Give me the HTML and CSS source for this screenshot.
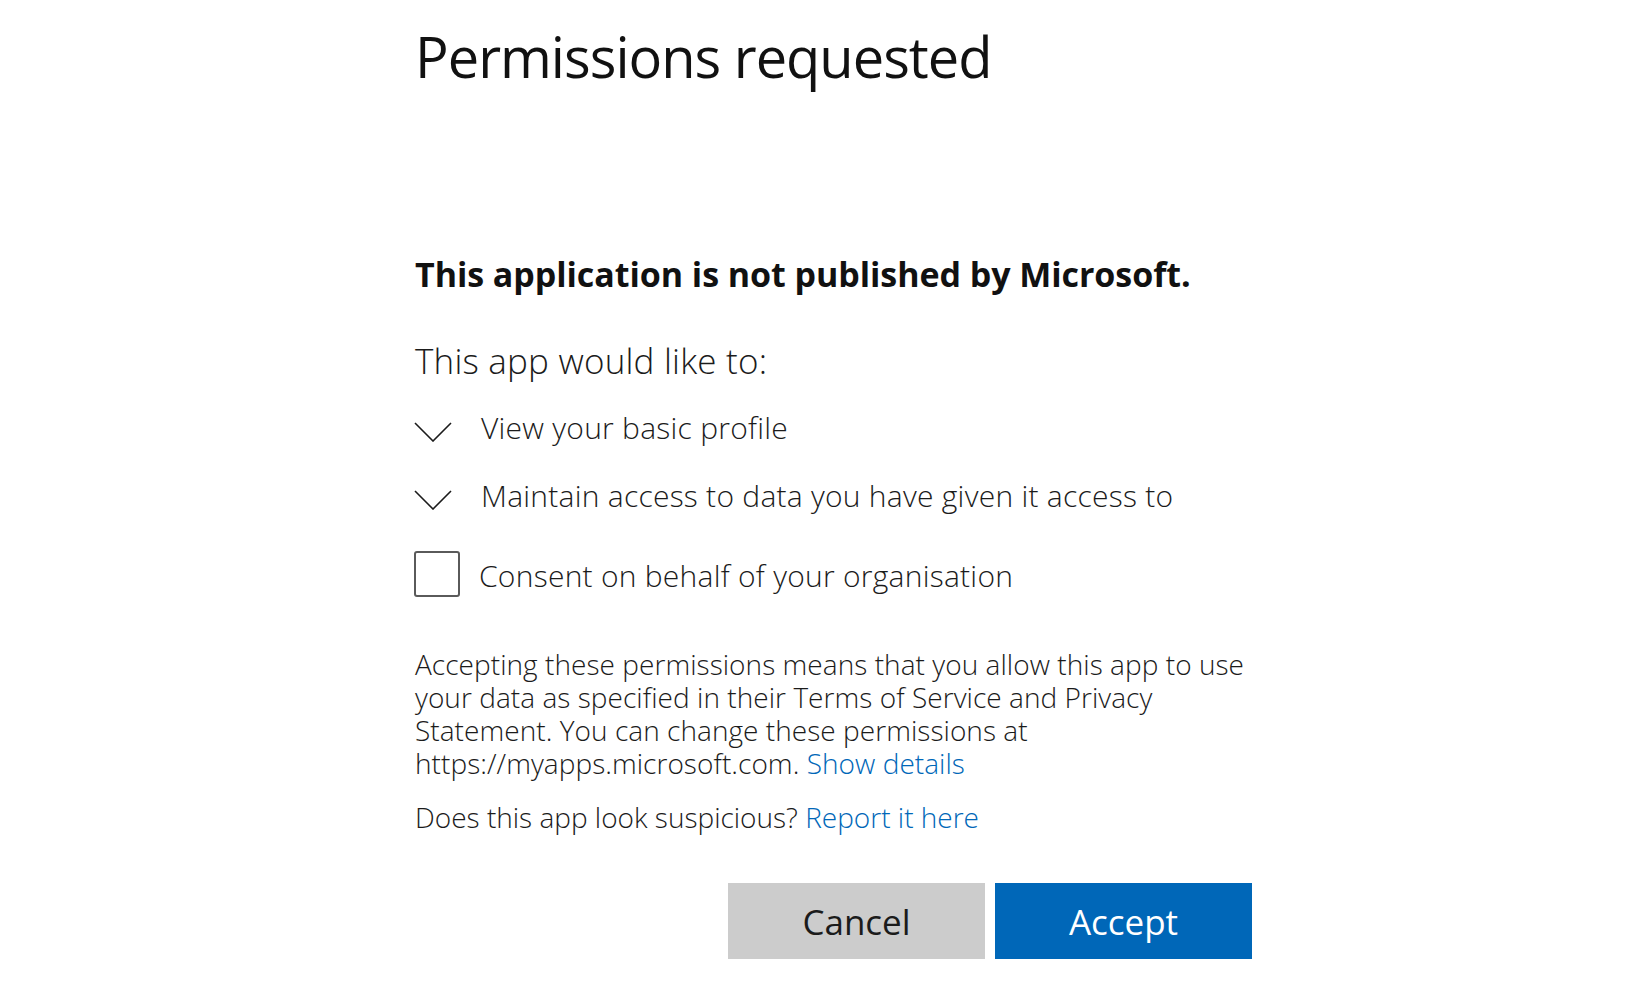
FILE: index.html
```html
<!DOCTYPE html>
<html lang="en">
<head>
<meta charset="utf-8">
<title>Permissions requested</title>
<link rel="stylesheet" href="styles.css">
</head>
<body>
<main class="dialog">
  <h1 class="title">Permissions requested</h1>
  <p class="publisher">This application is not published by Microsoft.</p>
  <p class="lead">This app would like to:</p>
  <ul class="perms">
    <li class="perm">
      <svg class="chev" width="38" height="20" viewBox="0 0 38 20"><polyline points="1,1 19,19 37,1" fill="none" stroke="#1b1b1b" stroke-width="1.6"/></svg>
      <span class="perm-text">View your basic profile</span>
    </li>
    <li class="perm">
      <svg class="chev" width="38" height="20" viewBox="0 0 38 20"><polyline points="1,1 19,19 37,1" fill="none" stroke="#1b1b1b" stroke-width="1.6"/></svg>
      <span class="perm-text">Maintain access to data you have given it access to</span>
    </li>
    <li class="perm consent">
      <span class="checkbox"></span>
      <span class="perm-text consent-text">Consent on behalf of your organisation</span>
    </li>
  </ul>
  <p class="info">Accepting these permissions means that you allow this app to use<br>your data as specified in their Terms of Service and Privacy<br>Statement. You can change these permissions at<br>https://myapps.microsoft.com. <a class="link" href="#">Show details</a></p>
  <p class="report">Does this app look suspicious? <a class="link" href="#">Report it here</a></p>
  <div class="actions">
    <button class="btn btn-cancel" type="button">Cancel</button>
    <button class="btn btn-accept" type="button">Accept</button>
  </div>
</main>
</body>
</html>
```
FILE: styles.css
```css
html, body {
  margin: 0;
  padding: 0;
  background: #ffffff;
}
body {
  font-family: "Open Sans", "Noto Sans", sans-serif;
  color: #1b1b1b;
}
.dialog {
  display: flex;
  flex-direction: column;
  width: 837px;
  margin-left: 415px;
  padding-top: 28px;
}
.title {
  margin: 0;
  font-size: 56px;
  line-height: 56px;
  font-weight: 400;
  letter-spacing: -1px;
  color: #111111;
}
.publisher {
  margin: 173px 0 0;
  font-size: 34px;
  line-height: 34px;
  font-weight: 700;
  letter-spacing: -0.06px;
  color: #111111;
}
.lead {
  margin: 52px 0 0;
  font-size: 35px;
  line-height: 35px;
  font-weight: 300;
  letter-spacing: 0.2px;
}
.perms {
  list-style: none;
  margin: 35px 0 0;
  padding: 0;
  display: flex;
  flex-direction: column;
  gap: 38px;
}
.perm {
  display: flex;
  align-items: flex-start;
}
.perm + .consent {
  margin-top: 2px;
}
.chev {
  display: block;
  margin-top: 9px;
  margin-left: -1px;
  margin-right: 29px;
  flex: none;
}
.perm-text {
  font-size: 30px;
  line-height: 30px;
  font-weight: 300;
  letter-spacing: 0.25px;
  white-space: nowrap;
}
.checkbox {
  flex: none;
  width: 42px;
  height: 42px;
  border: 2px solid #5a5a5a;
  border-radius: 3px;
  margin-right: 19px;
  margin-left: -1px;
}
.consent-text {
  margin-top: 10px;
}
.info {
  margin: 51px 0 0;
  font-size: 28px;
  line-height: 33px;
  font-weight: 300;
  letter-spacing: 0.05px;
  white-space: nowrap;
}
.report {
  margin: 21px 0 0;
  font-size: 28px;
  line-height: 33px;
  font-weight: 300;
  letter-spacing: 0;
}
.link {
  color: #0067b8;
  text-decoration: none;
}
.actions {
  display: flex;
  justify-content: flex-end;
  gap: 10px;
  margin-top: 49px;
}
.btn {
  width: 257px;
  height: 76px;
  border: none;
  border-radius: 0;
  font-family: "Open Sans", "Noto Sans", sans-serif;
  font-size: 35px;
  font-weight: 400;
  padding: 0;
  cursor: pointer;
}
.btn-cancel {
  background: #cccccc;
  color: #1b1b1b;
}
.btn-accept {
  background: #0067b8;
  color: #ffffff;
}
```
